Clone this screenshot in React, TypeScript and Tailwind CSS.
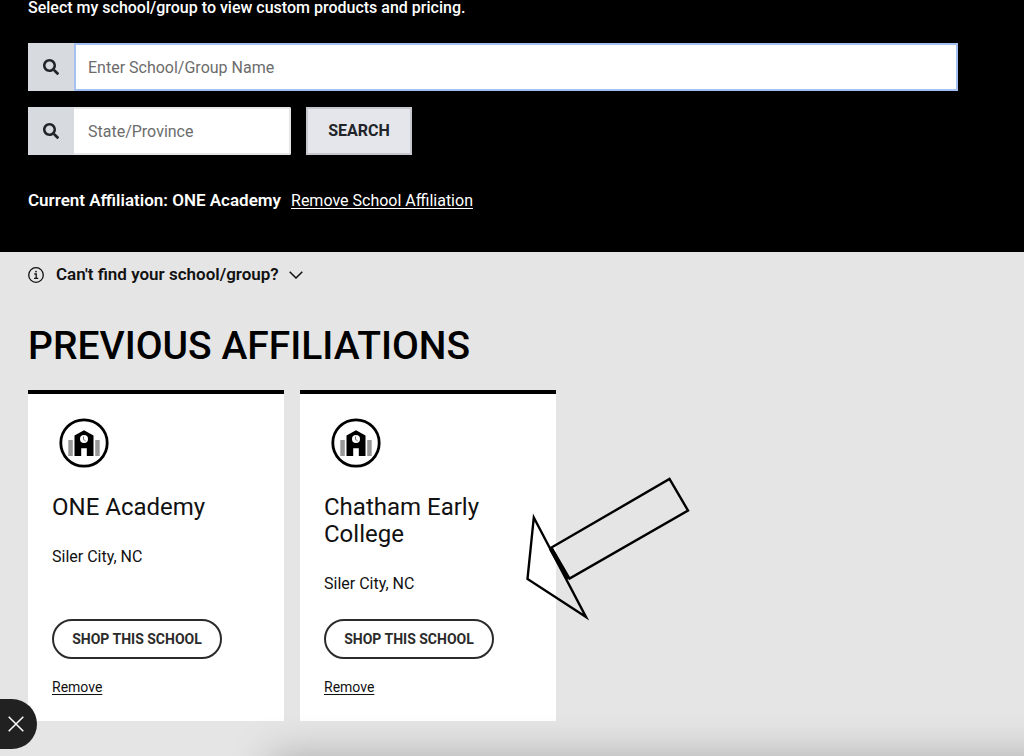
import { FaSearch } from "react-icons/fa"

type School = {
  name: string
  location: string
}

const schools: School[] = [
  { name: "ONE Academy", location: "Siler City, NC" },
  { name: "Chatham Early College", location: "Siler City, NC" },
]

function SchoolIcon() {
  return (
    <svg viewBox="0 0 64 64" className="w-16 h-16" aria-hidden="true">
      <circle cx="32" cy="32" r="23.2" fill="#fff" stroke="#000" strokeWidth="2.8" />
      <rect x="16.3" y="29" width="4.5" height="16" fill="#999" />
      <rect x="43.2" y="29" width="4.5" height="16" fill="#999" />
      <path d="M32 19.3 41.5 24.5V45H34.8v-7.8h-5.6V45h-6.7V24.5z" fill="#000" />
      <circle cx="32" cy="28" r="4" fill="#fff" />
      <path d="M31.5 25.5v3l2 1.2" fill="none" stroke="#777" strokeWidth="1" />
    </svg>
  )
}

function InfoIcon() {
  return (
    <svg viewBox="0 0 16 16" className="w-4 h-4" fill="none" stroke="#111" aria-hidden="true">
      <circle cx="8" cy="8" r="7.3" strokeWidth="1.3" />
      <path d="M6.3 7h1.9v4.3M6 11.4h4.2" strokeWidth="1.3" />
      <circle cx="8" cy="4.6" r="0.9" fill="#111" stroke="none" />
    </svg>
  )
}

function SearchField({ id, label, focused }: { id: string; label: string; focused?: boolean }) {
  return (
    <div className="flex h-12">
      <label htmlFor={id} className="flex w-[46px] shrink-0 items-center justify-center bg-[#d7dadf] text-[#212529]">
        <FaSearch className="w-4 h-4" aria-hidden="true" />
      </label>
      <input
        id={id}
        type="text"
        aria-label={label}
        placeholder={label}
        className={`min-w-0 flex-1 bg-white px-3 pt-0.5 text-base text-black outline-none placeholder:text-[#6c6c6c] ${
          focused ? "border-2 border-[#a3c0f0]" : "rounded-r-xs border-2 border-l-0 border-[#e4e6e8] pl-3.5"
        }`}
      />
    </div>
  )
}

function SchoolCard({ school }: { school: School }) {
  return (
    <li className="flex flex-col items-start border-t-4 border-black bg-white px-6 pt-[17px] pb-6 text-[#111]">
      <SchoolIcon />
      <h3 className="mt-[19px] text-2xl leading-[27px]">{school.name}</h3>
      <p className="mt-[26px] mb-[25px] text-base leading-5">{school.location}</p>
      <button
        type="button"
        className="mt-auto h-10 w-[170px] rounded-full border-2 border-[#2b2b2b] text-sm font-bold text-[#2b2b2b]"
      >
        SHOP THIS SCHOOL
      </button>
      <a href="#remove" className="mt-[18px] text-sm leading-5 underline underline-offset-2">
        Remove
      </a>
    </li>
  )
}

export default function App() {
  return (
    <main className="min-h-screen overflow-hidden bg-[#e5e5e5] font-['Roboto',sans-serif]">
      <section className="bg-black px-7 pb-[39px] text-white">
        <p className="-mt-1 mb-[23px] text-base leading-6 font-medium">
          Select my school/group to view custom products and pricing.
        </p>
        <form className="mr-[38px]">
          <SearchField id="school" label="Enter School/Group Name" focused />
          <div className="mt-4 flex gap-[15px]">
            <div className="w-[263px]">
              <SearchField id="state" label="State/Province" />
            </div>
            <button
              type="button"
              className="h-12 w-[106px] border-2 border-[#c6c8ce] bg-[#e5e6eb] text-base font-bold text-[#212529]"
            >
              SEARCH
            </button>
          </div>
        </form>
        <div className="mt-[33px] flex items-baseline gap-2.5 text-base leading-6">
          <strong className="text-[17px] font-semibold">Current Affiliation: ONE Academy</strong>
          <a href="#remove-affiliation" className="underline underline-offset-2">
            Remove School Affiliation
          </a>
        </div>
      </section>

      <section className="px-7 pt-[11px] pb-9">
        <button type="button" className="flex h-6 items-center text-[17px] font-semibold text-[#111]">
          <InfoIcon />
          <span className="ml-3">Can't find your school/group?</span>
          <svg viewBox="0 0 14 8" className="ml-2.5 h-2 w-3.5" fill="none" stroke="#111" strokeWidth="1.5" aria-hidden="true">
            <path d="M0.7 0.7 7 7l6.3-6.3" />
          </svg>
        </button>
        <h2 className="mt-[35px] text-[39px] leading-12 font-medium text-black">PREVIOUS AFFILIATIONS</h2>

        <div className="relative mt-5">
          <ul className="grid grid-cols-[repeat(auto-fill,256px)] gap-4">
            {schools.map((school) => (
              <SchoolCard key={school.name} school={school} />
            ))}
          </ul>
          <svg
            viewBox="0 0 168 148"
            className="pointer-events-none absolute top-[85px] left-[496px] h-[148px] w-[168px]"
            fill="none"
            stroke="#000"
            strokeWidth="2.4"
            aria-hidden="true"
          >
            <path d="M9.8 42.5 3.5 104 62 142z" />
            <path d="M27.5 72.5 145.5 4 164 35.5 45.5 103.5z" />
            <path d="M26.5 73.5 44 104" strokeWidth="3.6" />
          </svg>
        </div>
      </section>

      <div className="fixed top-full -right-20 left-[270px] h-24 shadow-[0_0_40px_rgba(0,0,0,0.25)]"></div>
      <button
        type="button"
        aria-label="Close"
        className="fixed bottom-[7px] left-0 flex h-[50px] w-[37px] items-center rounded-r-full bg-[#212121] pl-2"
      >
        <svg viewBox="0 0 16 16" className="h-4 w-4" fill="none" stroke="#fff" strokeWidth="1.5" aria-hidden="true">
          <path d="M0.7 0.7l14.6 14.6M15.3 0.7.7 15.3" />
        </svg>
      </button>
    </main>
  )
}
